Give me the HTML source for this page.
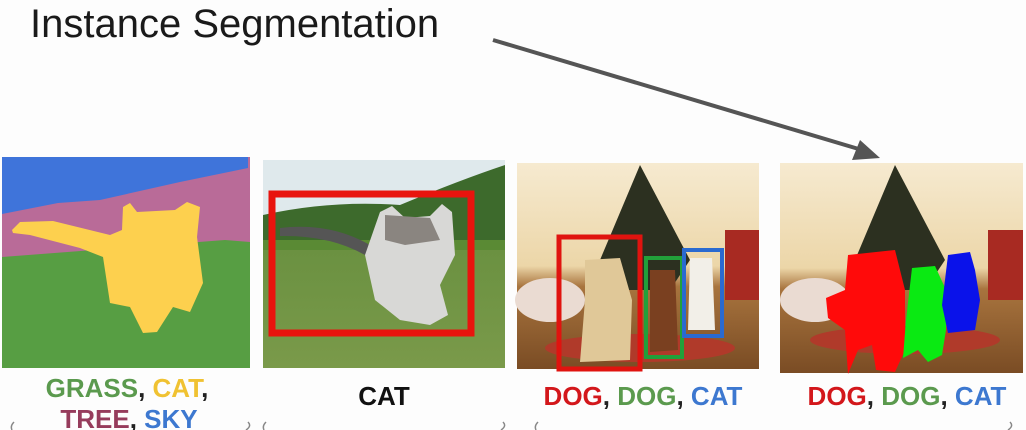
<!DOCTYPE html>
<html><head><style>
html,body{margin:0;padding:0;background:#fdfdfd;width:1026px;height:430px;overflow:hidden}
svg{display:block}
text{font-family:"Liberation Sans",sans-serif}
.l{font-weight:bold;font-size:26px}
</style></head><body>
<svg width="1026" height="430" viewBox="0 0 1026 430">
<defs>
<linearGradient id="room" x1="0" y1="0" x2="0" y2="1">
<stop offset="0" stop-color="#f6ead0"/><stop offset="0.5" stop-color="#ecd6a8"/><stop offset="0.6" stop-color="#a8743e"/><stop offset="1" stop-color="#7a4c24"/></linearGradient>
<linearGradient id="grass" x1="0" y1="0" x2="0" y2="1">
<stop offset="0" stop-color="#5f8a3a"/><stop offset="1" stop-color="#7a9a4a"/></linearGradient>
</defs>
<text x="30" y="37" font-size="40" fill="#1a1a1a">Instance Segmentation</text>
<line x1="493" y1="40" x2="862" y2="150" stroke="#555" stroke-width="4"/>
<polygon points="880,158 852,160 860,140" fill="#555"/>

<!-- panel 1 -->
<rect x="2" y="157" width="248" height="211" fill="#579e43"/>
<polygon points="2,157 250,157 250,242 225,240 2,257" fill="#b96b98"/>
<polygon points="2,157 248,157 248,168 180,182 100,200 58,203 2,214" fill="#3f74da"/>
<polygon points="13,233 12,230 20,222 53,221 110,235 122,230 123,207 130,203 137,212 175,210 187,202 200,207 197,237 203,283 190,312 173,307 157,332 143,333 130,307 110,303 103,257 80,248 30,235" fill="#fdd04e"/>

<!-- panel 2 -->
<rect x="263" y="160" width="242" height="208" fill="url(#grass)"/>
<rect x="263" y="160" width="242" height="55" fill="#dfe9ec"/>
<path d="M263,215 Q330,200 400,205 Q460,180 505,165 L505,240 L263,240Z" fill="#3d6a2c"/>
<path d="M263,240 L505,240 L505,250 L263,250Z" fill="#5a8a34"/>
<path d="M280,228 Q330,222 370,245 L365,255 Q330,235 280,236Z" fill="#555"/>
<path d="M380,212 L392,206 L405,218 L430,216 L442,204 L452,212 L455,255 L440,285 L448,315 L430,325 L400,320 L375,300 L365,255Z" fill="#d8d8d6"/>
<path d="M385,215 L430,218 L440,240 L405,245 L385,240Z" fill="#8a8580"/>
<rect x="272" y="194" width="199" height="139" fill="none" stroke="#e8140e" stroke-width="7"/>

<!-- panel 3 -->
<rect x="517" y="163" width="242" height="206" fill="url(#room)"/>
<polygon points="640,165 600,260 610,290 670,290 690,260" fill="#2c3020"/>
<rect x="725" y="230" width="34" height="70" fill="#a82a22"/>
<ellipse cx="550" cy="300" rx="35" ry="22" fill="#eadbd2"/>
<ellipse cx="640" cy="348" rx="95" ry="14" fill="#b03a2a"/>
<path d="M585,260 L620,258 L632,300 L630,360 L580,362 L585,300Z" fill="#e0c898"/>
<path d="M650,270 L675,270 L678,350 L650,352Z" fill="#7a4020"/>
<path d="M690,258 L712,258 L715,330 L688,330Z" fill="#f2efe8"/>
<rect x="559" y="237" width="81" height="132" fill="none" stroke="#e0130f" stroke-width="5"/>
<rect x="646" y="258" width="36" height="99" fill="none" stroke="#22a03a" stroke-width="4"/>
<rect x="684" y="250" width="38" height="86" fill="none" stroke="#2a6ad0" stroke-width="4"/>

<!-- panel 4 -->
<rect x="780" y="163" width="243" height="210" fill="url(#room)"/>
<polygon points="895,165 855,260 865,290 925,290 945,260" fill="#2c3020"/>
<rect x="988" y="230" width="35" height="70" fill="#a82a22"/>
<ellipse cx="815" cy="300" rx="35" ry="22" fill="#eadbd2"/>
<ellipse cx="905" cy="340" rx="95" ry="14" fill="#b03a2a"/>
<path d="M848,255 L895,250 L905,290 L905,350 L895,372 L876,370 L872,345 L858,350 L848,374 L845,330 L828,318 L826,298 L845,290Z" fill="#ff0a0a"/>
<path d="M912,268 L935,266 L946,290 L946,330 L942,355 L928,362 L918,350 L903,358 L906,320Z" fill="#0aea12"/>
<path d="M948,255 L970,252 L975,270 L980,300 L975,330 L948,333 L942,305Z" fill="#0a12ea"/>

<!-- labels -->
<text class="l" x="127" y="397" text-anchor="middle"><tspan fill="#5b9a4e">GRASS</tspan><tspan fill="#222">, </tspan><tspan fill="#f0c232">CAT</tspan><tspan fill="#222">,</tspan></text>
<text class="l" x="129" y="428" text-anchor="middle"><tspan fill="#963c5c">TREE</tspan><tspan fill="#222">, </tspan><tspan fill="#3d78d0">SKY</tspan></text>
<text class="l" x="384" y="405" text-anchor="middle" fill="#111">CAT</text>
<text class="l" x="643" y="405" text-anchor="middle"><tspan fill="#d3171b">DOG</tspan><tspan fill="#222">, </tspan><tspan fill="#5b9a4e">DOG</tspan><tspan fill="#222">, </tspan><tspan fill="#3d78d0">CAT</tspan></text>
<text class="l" x="907" y="405" text-anchor="middle"><tspan fill="#d3171b">DOG</tspan><tspan fill="#222">, </tspan><tspan fill="#5b9a4e">DOG</tspan><tspan fill="#222">, </tspan><tspan fill="#3d78d0">CAT</tspan></text>
<g stroke="#888" stroke-width="1.5" fill="none">
<path d="M14,422 Q10,426 12,430"/><path d="M248,422 Q252,426 246,430"/>
<path d="M266,422 Q262,426 264,430"/><path d="M503,422 Q507,426 501,430"/>
<path d="M538,422 Q534,426 536,430"/><path d="M1010,422 Q1014,426 1008,430"/>
</g>
</svg>
</body></html>
